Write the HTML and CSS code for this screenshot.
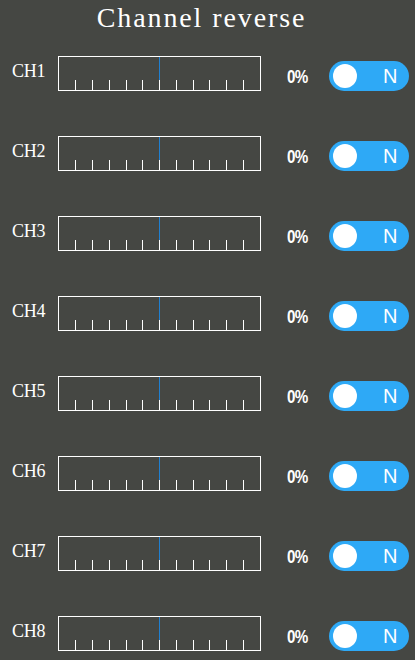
FILE: index.html
```html
<!DOCTYPE html>
<html>
<head>
<meta charset="utf-8">
<link rel="stylesheet" href="styles.css">
</head>
<body>
<div class="screen">
  <h1 class="title">Channel reverse</h1>
  <div class="list">
    <div class="row"><span class="label">CH1</span><div class="bar"><div class="center"></div><div class="ticks"><i></i><i></i><i></i><i></i><i></i><i></i><i></i><i></i><i></i><i></i><i></i></div></div><span class="pct">0%</span><div class="toggle"><span class="knob"></span><span class="state">N</span></div></div>
    <div class="row"><span class="label">CH2</span><div class="bar"><div class="center"></div><div class="ticks"><i></i><i></i><i></i><i></i><i></i><i></i><i></i><i></i><i></i><i></i><i></i></div></div><span class="pct">0%</span><div class="toggle"><span class="knob"></span><span class="state">N</span></div></div>
    <div class="row"><span class="label">CH3</span><div class="bar"><div class="center"></div><div class="ticks"><i></i><i></i><i></i><i></i><i></i><i></i><i></i><i></i><i></i><i></i><i></i></div></div><span class="pct">0%</span><div class="toggle"><span class="knob"></span><span class="state">N</span></div></div>
    <div class="row"><span class="label">CH4</span><div class="bar"><div class="center"></div><div class="ticks"><i></i><i></i><i></i><i></i><i></i><i></i><i></i><i></i><i></i><i></i><i></i></div></div><span class="pct">0%</span><div class="toggle"><span class="knob"></span><span class="state">N</span></div></div>
    <div class="row"><span class="label">CH5</span><div class="bar"><div class="center"></div><div class="ticks"><i></i><i></i><i></i><i></i><i></i><i></i><i></i><i></i><i></i><i></i><i></i></div></div><span class="pct">0%</span><div class="toggle"><span class="knob"></span><span class="state">N</span></div></div>
    <div class="row"><span class="label">CH6</span><div class="bar"><div class="center"></div><div class="ticks"><i></i><i></i><i></i><i></i><i></i><i></i><i></i><i></i><i></i><i></i><i></i></div></div><span class="pct">0%</span><div class="toggle"><span class="knob"></span><span class="state">N</span></div></div>
    <div class="row"><span class="label">CH7</span><div class="bar"><div class="center"></div><div class="ticks"><i></i><i></i><i></i><i></i><i></i><i></i><i></i><i></i><i></i><i></i><i></i></div></div><span class="pct">0%</span><div class="toggle"><span class="knob"></span><span class="state">N</span></div></div>
    <div class="row"><span class="label">CH8</span><div class="bar"><div class="center"></div><div class="ticks"><i></i><i></i><i></i><i></i><i></i><i></i><i></i><i></i><i></i><i></i><i></i></div></div><span class="pct">0%</span><div class="toggle"><span class="knob"></span><span class="state">N</span></div></div>
  </div>
</div>
</body>
</html>
```

FILE: styles.css
```css
html, body {
  margin: 0;
  padding: 0;
  background: #454743;
}
.screen {
  width: 415px;
  height: 660px;
  overflow: hidden;
  background: #454743;
  color: #fff;
}
.title {
  margin: 0;
  height: 56px;
  padding-top: 1px;
  box-sizing: border-box;
  text-align: center;
  padding-right: 12px;
  font-family: "Liberation Serif", serif;
  font-weight: normal;
  font-size: 28px;
  letter-spacing: 1.9px;
  line-height: 34px;
}
.list {
  display: flex;
  flex-direction: column;
  gap: 45px;
}
.row {
  display: flex;
  align-items: center;
  height: 35px;
  padding-left: 12px;
}
.label {
  width: 46px;
  font-family: "Liberation Serif", serif;
  font-size: 18px;
  letter-spacing: -0.3px;
  margin-top: -4px;
}
.bar {
  position: relative;
  width: 201px;
  height: 33px;
  border: 1px solid #fff;
  flex: none;
}
.center {
  position: absolute;
  left: 100px;
  top: 0;
  height: 24px;
  width: 1px;
  background: #1f7fd0;
}
.ticks {
  position: absolute;
  left: 0;
  right: 0;
  bottom: 0;
  height: 10px;
  display: flex;
  justify-content: space-evenly;
  padding: 0 0.5px;
}
.ticks i {
  width: 1px;
  height: 10px;
  background: #fff;
}
.pct {
  margin-left: 26px;
  width: 42px;
  font-family: "Liberation Sans", sans-serif;
  font-weight: bold;
  font-size: 19px;
  letter-spacing: -1px;
  margin-top: 6px;
  display: inline-block;
  transform: scaleX(0.8);
  transform-origin: left center;
}
.toggle {
  margin-top: 5px;
  width: 80px;
  height: 30px;
  border-radius: 15px;
  background: #2ea9f6;
  display: flex;
  align-items: center;
  box-sizing: border-box;
  padding-left: 4px;
  flex: none;
}
.knob {
  width: 24px;
  height: 24px;
  border-radius: 50%;
  background: #fff;
}
.state {
  margin-left: 26px;
  font-family: "Liberation Sans", sans-serif;
  font-size: 20px;
  color: #fff;
  margin-top: 1px;
}
```
